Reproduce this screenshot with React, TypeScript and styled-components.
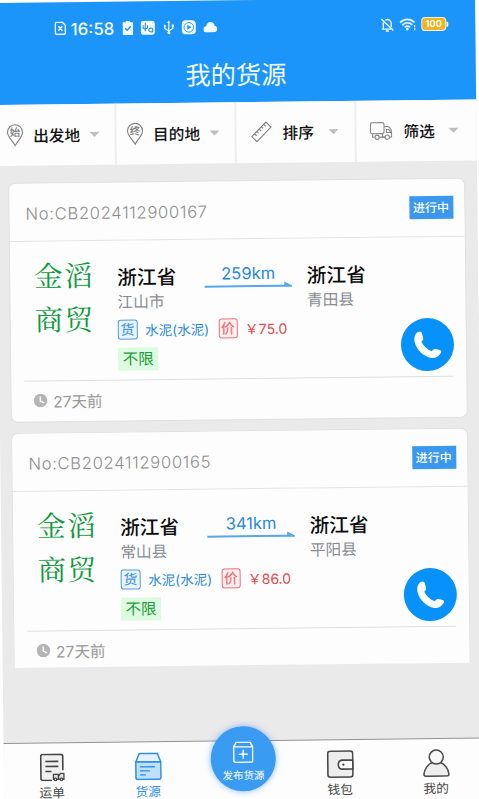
import React from 'react';
import styled, { createGlobalStyle } from 'styled-components';

const GlobalStyle = createGlobalStyle`
  * { box-sizing: border-box; }
  html, body { margin: 0; padding: 0; background: #fff; overflow: hidden; }
  svg { display: block; flex: none; }
`;

const Viewport = styled.div`
  width: 479px;
  height: 799px;
  overflow: hidden;
  background: #fff;
  font-family: Inter, 'Noto Sans CJK SC', sans-serif;
`;

const Phone = styled.div`
  width: 480px;
  height: 814px;
  margin: 2.6px 0 0 -5.2px;
  transform-origin: 5.2px -2.6px;
  transform: rotate(-0.66deg);
  display: flex;
  flex-direction: column;
  background: #eaeaea;
`;

const Header = styled.header`
  height: 102px;
  flex: none;
  background: #1c95fa;
  color: #f2fbff;
`;

const StatusBar = styled.div`
  height: 52px;
  padding: 0 27px 0 59px;
  display: flex;
  justify-content: space-between;
`;

const StatusGroup = styled.div<{ $gap: number }>`
  display: flex;
  align-items: center;
  gap: ${(p) => p.$gap}px;
`;

const Time = styled.span`
  font-size: 16.8px;
  font-weight: 500;
  width: 43px;
  margin: 1px 1px 0 -3px;
  white-space: nowrap;
`;

const Battery = styled.span`
  display: flex;
  align-items: center;
  &::after {
    content: '';
    width: 2px;
    height: 5px;
    background: #f3ead0;
    border-radius: 0 1px 1px 0;
  }
`;

const BatteryLevel = styled.span`
  width: 25px;
  height: 14px;
  border: 1.3px solid #f8f1dc;
  border-radius: 4px;
  background: #eeb424;
  font-size: 9.5px;
  font-weight: 600;
  line-height: 11.5px;
  text-align: center;
`;

const Title = styled.h1`
  margin: 4.5px 0 0;
  font-size: 25.3px;
  font-weight: 400;
  line-height: 36px;
  text-align: center;
`;

const Filters = styled.nav`
  height: 60.5px;
  flex: none;
  display: flex;
  background: #fdfdfd;
`;

const Filter = styled.div<{ $pad: number; $gap: number }>`
  width: 120px;
  padding: 0 16px 0 ${(p) => p.$pad}px;
  display: flex;
  align-items: center;
  gap: ${(p) => p.$gap}px;
  border-right: 2px solid #eeeeee;
  color: #111;
  font-size: 15.7px;
  font-weight: 500;
  white-space: nowrap;
  &:last-child { border-right: 0; padding-right: 18px; }
`;

const Caret = styled.i`
  margin-left: auto;
  border: 5px solid transparent;
  border-top: 5.5px solid #bebebe;
  border-bottom: 0;
`;

const List = styled.main`
  flex: none;
  height: 577px;
  padding: 17.5px 12px 0 11px;
  display: flex;
  flex-direction: column;
  gap: 10.5px;
`;

const Card = styled.article<{ $cut?: boolean }>`
  height: ${(p) => (p.$cut ? 234.5 : 239.5)}px;
  border: 1.5px solid #e0e0e0;
  ${(p) => p.$cut && 'border-bottom: 0;'}
  border-radius: ${(p) => (p.$cut ? '7px 7px 0 0' : '7px')};
  background: #fdfdfd;
`;

const CardHead = styled.div`
  height: 58px;
  padding: 0 11.5px 0 16px;
  display: flex;
  align-items: center;
  justify-content: space-between;
  border-bottom: 1.5px solid #e4e4e4;
`;

const OrderNo = styled.span`
  font-size: 16.6px;
  font-weight: 300;
  letter-spacing: 0.68px;
  color: #8e8e8e;
  padding-top: 3px;
  white-space: nowrap;
`;

const Status = styled.span`
  width: 44px;
  height: 23px;
  margin-top: -1px;
  background: #3a99ee;
  color: #fff;
  font-size: 12px;
  font-weight: 500;
  line-height: 23px;
  text-align: center;
`;

const CardBody = styled.div`
  height: 140px;
  margin: 0 13px 0 13px;
  border-bottom: 1.5px solid #dedede;
  padding: 14px 0 0 11px;
  display: grid;
  grid-template-columns: 83px 1fr 53px;
`;

const Company = styled.div`
  width: 62px;
  font-family: 'Noto Serif CJK SC', 'Noto Sans CJK SC', serif;
  font-weight: 400;
  font-size: 28.5px;
  letter-spacing: 1.5px;
  line-height: 43.5px;
  color: #0c9a3c;
  margin-top: -3px;
`;

const Route = styled.div`
  display: grid;
  grid-template-columns: 87px 88px 1fr;
  height: 65px;
  padding-top: 10px;
`;

const Place = styled.div`
  white-space: nowrap;
`;

const Province = styled.div`
  font-size: 19.7px;
  font-weight: 500;
  line-height: 26px;
  color: #0c0c0c;
`;

const City = styled.div`
  font-size: 15.7px;
  line-height: 23px;
  color: #888c92;
`;

const Distance = styled.div`
  margin-top: -2px;
  text-align: center;
  font-size: 16.5px;
  line-height: 24px;
  color: #2487e2;
  svg { margin-top: -4px; }
`;

const Leg = styled(Place)`
  margin-left: 14.5px;
`;

const Goods = styled.div`
  display: flex;
  align-items: center;
  height: 20px;
  font-size: 14px;
  white-space: nowrap;
`;

const Mark = styled.span<{ $color: string; $bg: string }>`
  flex: none;
  width: 19.5px;
  height: 19.5px;
  border: 1.2px solid ${(p) => p.$color};
  border-radius: 3px;
  background: ${(p) => p.$bg};
  color: ${(p) => p.$color};
  font-size: 14px;
  font-weight: 500;
  line-height: 18px;
  text-align: center;
`;

const GoodsName = styled.span`
  flex: none;
  width: 81px;
  padding-left: 8px;
  color: #2b8ae0;
  font-size: 13.5px;
`;

const Price = styled.span`
  padding-left: 7px;
  color: #e4474d;
`;

const Limit = styled.span`
  display: block;
  width: 40px;
  height: 23px;
  margin-top: 8px;
  background: #dcfbe0;
  color: #1e9a38;
  font-size: 15.5px;
  line-height: 23.5px;
  text-align: center;
`;

const Call = styled.button`
  width: 53px;
  height: 53px;
  margin: 67px 0 0 1px;
  padding: 0;
  border: 0;
  border-radius: 50%;
  background: #0791fa;
  display: flex;
  align-items: center;
  justify-content: center;
`;

const Age = styled.div`
  height: 40px;
  padding: 0 0 2px 21.5px;
  display: flex;
  align-items: center;
  gap: 6px;
  font-size: 15.6px;
  color: #999;
`;

const TabBar = styled.footer`
  flex: 1;
  display: grid;
  grid-template-columns: repeat(5, 96px);
  border-top: 1.4px solid #909090;
  background: #fdfdfd;
`;

const Tab = styled.div<{ $active?: boolean }>`
  display: flex;
  flex-direction: column;
  align-items: center;
  padding-top: 10.5px;
  font-size: 12.7px;
  line-height: 18px;
  color: ${(p) => (p.$active ? '#2b8fe8' : '#4a4a4a')};
  svg { margin-bottom: 3px; }
`;

const Publish = styled.div`
  width: 65px;
  height: 65px;
  margin: -15px auto 0 15px;
  border-radius: 50%;
  background: #3a9bf2;
  box-shadow: 0 0 6px rgba(70, 140, 250, 0.6);
  color: #fff;
  display: flex;
  flex-direction: column;
  align-items: center;
  padding-top: 15.5px;
  font-size: 10.5px;
  line-height: 16px;
  svg { margin-bottom: 4.5px; }
`;

const PinIcon = ({ label }: { label: string }) => (
  <svg width="17" height="23" viewBox="0 0 17 23" fill="none" stroke="#808080" strokeWidth="1.1">
    <path d="M8.5 21.8C6.7 17.6 1 13.6 1 8.4a7.5 7.5 0 0 1 15 0c0 5.2-5.7 9.2-7.5 13.4z" />
    <text x="8.5" y="12.3" fontSize="10.5" textAnchor="middle" fill="#777" stroke="none">{label}</text>
  </svg>
);

const RulerIcon = () => (
  <svg width="22" height="22" viewBox="0 0 22 22" fill="none" stroke="#808080" strokeWidth="1.1">
    <path d="M1.2 15.5 15.5 1.2l5 5L6.3 20.6z M4.1 12.7l2 2 M6.4 10.4l1.6 1.6 M8.7 8.1l2 2 M11 5.8l1.6 1.6 M13.3 3.5l2 2" />
  </svg>
);

const TruckIcon = () => (
  <svg width="23" height="19" viewBox="0 0 23 19" fill="#fdfdfd" stroke="#888" strokeWidth="1.1">
    <path d="M13 5h4.500c2.400 0 4 3 4.500 5v5.500H13z M17 8h2.500l1.500 3h-4z" />
    <rect x="1" y="1" width="13.500" height="11" rx="1.500" />
    <path d="M3 12v3.500h2M10 15.500h5" />
    <circle cx="7.500" cy="15.600" r="2.100" />
    <circle cx="17.700" cy="15.600" r="2.100" />
  </svg>
);

const Arrow = () => (
  <svg width="88" height="7" viewBox="0 0 88 7">
    <path d="M0 4h80V.8l8 4.100v1.100H0z" fill="#58a7ee" />
  </svg>
);

const PhoneIcon = () => (
  <svg width="28" height="28" viewBox="0 0 28 28" fill="#fff">
    <path d="M5.500.4C7.300.2 8 1.600 8.400 3.300l.8 3.600c.4 1.700-.4 2.600-1.800 3.600 2 4.300 5.900 8 10.400 9.800 1.200-1.900 2.500-2.600 4.200-2.200l3.700.9c1.600.5 1.900 1.700 1 3.100-2.100 3.600-5.700 5.500-9.700 4.800C9.600 25.600 2.500 18.600.7 10.700-.3 6.200 1.500 1.200 5.500.4z" />
  </svg>
);

const ClockIcon = () => (
  <svg width="14" height="14" viewBox="0 0 14 14">
    <circle cx="7" cy="7" r="6.800" fill="#b5b5b5" />
    <path d="M6.700 3v4.600l3.900 1.700" fill="none" stroke="#fdfdfd" strokeWidth="1.400" />
  </svg>
);

const LeftStatus = () => (
  <StatusGroup $gap={7.4}>
    <svg width="12" height="14" viewBox="0 0 12 14" fill="none" stroke="currentColor" strokeWidth="1.400">
      <path d="M1 2.500Q1 1 2.500 1H8l3 3v7.500Q11 13 9.500 13h-7Q1 13 1 11.500zM4 5l4 4.500M8 5l-4 4.500" />
    </svg>
    <Time>16:58</Time>
    <svg width="11" height="15" viewBox="0 0 11 15">
      <path d="M1 1.700h2.500V.500h4v1.200H10q.7 0 .7.800v11q0 1-.9 1H1.200q-.9 0-.9-1v-11q0-.8.700-.8z" fill="currentColor" />
      <path d="m2.800 7.600 2 2 3.700-3.800" fill="none" stroke="#1c95fa" strokeWidth="1.400" />
    </svg>
    <svg width="15" height="15" viewBox="0 0 15 15">
      <rect x=".5" y=".5" width="14" height="14" rx="3" fill="currentColor" />
      <g fill="none" stroke="#1c85e0" strokeWidth="1">
        <path d="M5 2.500v8.500M2.800 5v2.500L5 9l2.200-1.500V5" />
        <circle cx="10.500" cy="9.800" r="2" />
      </g>
    </svg>
    <svg width="11" height="15" viewBox="0 0 11 15" fill="none" stroke="currentColor" strokeWidth="1.200">
      <path d="M5.500 2v10.500M1.500 6v2.500l4 2.500 4-2.500V5.500" />
      <path d="m3.800 3 1.700-2.500L7.200 3z" fill="currentColor" stroke="none" />
      <circle cx="5.500" cy="12.700" r="1.500" fill="currentColor" stroke="none" />
      <circle cx="1.500" cy="5.800" r="1.100" fill="currentColor" stroke="none" />
      <path d="M8.400 4.500h2.200v2.200H8.400z" fill="currentColor" stroke="none" />
    </svg>
    <svg width="15" height="15" viewBox="0 0 15 15">
      <rect x=".5" y=".5" width="14" height="14" rx="4" fill="currentColor" />
      <circle cx="7.500" cy="7.500" r="4.800" fill="none" stroke="#1c95fa" strokeWidth=".9" />
      <path d="m6 5 4 2.500L6 10z" fill="#1c95fa" />
    </svg>
    <svg width="14" height="11" viewBox="0 0 14 11" fill="currentColor">
      <path d="M3.500 10.800a3.100 3.100 0 0 1-.6-6.200C3.200 2.200 4.900.5 7.200.5c2.200 0 3.700 1.400 4 3.600 1.600.2 2.700 1.500 2.700 3.200 0 2-1.400 3.500-3.200 3.500z" />
    </svg>
  </StatusGroup>
);

const RightStatus = () => (
  <StatusGroup $gap={5}>
    <svg width="14" height="15" viewBox="0 0 14 15" fill="none" stroke="currentColor" strokeWidth="1.400">
      <path d="M1 1.500 13 13M3 5v6.500H1.500M3 11.500h7.500M5 2.500C8 1 11 3 11 6v3.500M5.500 13.500h3" />
    </svg>
    <svg width="17" height="14" viewBox="0 0 17 14" fill="none" stroke="currentColor" strokeWidth="1.800">
      <path d="M.8 5.200c4.200-4.300 10.200-4.300 14.400 0M3 7.700c3-2.900 7-2.900 10 0M5.300 10c1.700-1.500 3.700-1.500 5.400 0" />
      <circle cx="8" cy="11.800" r="1.400" fill="currentColor" stroke="none" />
      <path d="M15.300 8v2M15.300 11v2" strokeWidth="1.300" />
    </svg>
    <Battery><BatteryLevel>100</BatteryLevel></Battery>
  </StatusGroup>
);

const WaybillIcon = () => (
  <svg width="25" height="28" viewBox="0 0 25 28" fill="none" stroke="#444" strokeWidth="1.600">
    <path d="M23 17V3q0-2-2-2H3Q1 1 1 3v22q0 2 2 2h9" fill="#f0f0f0" />
    <path d="M5.500 8h13M5.500 13h13M5.500 18h6" />
    <path d="M13.500 21h5v5h-5zM18.500 23l2-3h3.500v6h-5.500" fill="#ddd" strokeWidth="1.300" />
    <circle cx="15.500" cy="26" r="1.300" fill="#fff" strokeWidth="1.200" />
    <circle cx="21.500" cy="26" r="1.300" fill="#fff" strokeWidth="1.200" />
  </svg>
);

const CargoIcon = () => (
  <svg width="27" height="28" viewBox="0 0 27 28" fill="#bfdffc" stroke="#2b8fe8" strokeWidth="1.500" strokeLinejoin="round">
    <path d="M4.500 1h18L26 9.500H1z" fill="#e5f2fe" />
    <path d="M1 9.500h25V25q0 2-2 2H3q-2 0-2-2z" />
    <path d="M5 14.500h15M5 18.500h10M5 22.500h6" strokeWidth="1.300" />
  </svg>
);

const WalletIcon = () => (
  <svg width="27" height="28" viewBox="0 0 27 28" fill="#eee" stroke="#484848" strokeWidth="1.600">
    <rect x="1" y="1" width="25" height="26" rx="2.500" />
    <path d="M26 10H16q-4.500 0-4.500 4.500T16 19h10z" fill="#fff" />
    <circle cx="16.500" cy="14.500" r="1.200" fill="#484848" stroke="none" />
  </svg>
);

const UserIcon = () => (
  <svg width="27" height="28" viewBox="0 0 27 28" fill="#eee" stroke="#484848" strokeWidth="1.500" strokeLinejoin="round">
    <path d="M9.500 13.500C5 15 1.500 20 1 25q0 2 2 2h21q2 0 2-2c-.5-5-4-10-8.500-11.500" />
    <circle cx="13.500" cy="8" r="7" fill="#f8f8f8" />
  </svg>
);

const PublishIcon = () => (
  <svg width="21" height="22" viewBox="0 0 21 22" fill="none" stroke="#fff" strokeWidth="1.400" strokeLinejoin="round">
    <path d="M1 5.500 3.500 1h14L20 5.500V19q0 2-2 2H3q-2 0-2-2zM1 5.500h19M10.500 8.500v9M6 13h9" />
  </svg>
);

interface Order {
  no: string;
  from: string;
  to: string;
  distance: string;
  price: string;
}

const orders: Order[] = [
  { no: 'CB2024112900167', from: '江山市', to: '青田县', distance: '259km', price: '75.0' },
  { no: 'CB2024112900165', from: '常山县', to: '平阳县', distance: '341km', price: '86.0' },
];

const OrderCard = ({ order, cut }: { order: Order; cut?: boolean }) => (
  <Card $cut={cut}>
    <CardHead>
      <OrderNo>No:{order.no}</OrderNo>
      <Status>进行中</Status>
    </CardHead>
    <CardBody>
      <Company>金滔<br />商贸</Company>
      <div>
        <Route>
          <Place><Province>浙江省</Province><City>{order.from}</City></Place>
          <Distance>{order.distance}<Arrow /></Distance>
          <Leg><Province>浙江省</Province><City>{order.to}</City></Leg>
        </Route>
        <Goods>
          <Mark $color="#4b9ce4" $bg="#eaf5ff">货</Mark>
          <GoodsName>水泥(水泥)</GoodsName>
          <Mark $color="#e8747a" $bg="#fff0f0">价</Mark>
          <Price>￥{order.price}</Price>
        </Goods>
        <Limit>不限</Limit>
      </div>
      <Call aria-label="call"><PhoneIcon /></Call>
    </CardBody>
    <Age><ClockIcon />27天前</Age>
  </Card>
);

export default function App() {
  return (
    <Viewport>
      <GlobalStyle />
      <Phone>
        <Header>
          <StatusBar><LeftStatus /><RightStatus /></StatusBar>
          <Title>我的货源</Title>
        </Header>
        <Filters>
          <Filter $pad={10} $gap={9.5}><PinIcon label="始" />出发地<Caret /></Filter>
          <Filter $pad={10} $gap={9.5}><PinIcon label="终" />目的地<Caret /></Filter>
          <Filter $pad={14} $gap={10}><RulerIcon />排序<Caret /></Filter>
          <Filter $pad={13} $gap={11}><TruckIcon />筛选<Caret /></Filter>
        </Filters>
        <List>
          <OrderCard order={orders[0]} />
          <OrderCard order={orders[1]} cut />
        </List>
        <TabBar>
          <Tab><WaybillIcon />运单</Tab>
          <Tab $active><CargoIcon />货源</Tab>
          <Publish><PublishIcon />发布货源</Publish>
          <Tab><WalletIcon />钱包</Tab>
          <Tab><UserIcon />我的</Tab>
        </TabBar>
      </Phone>
    </Viewport>
  );
}
